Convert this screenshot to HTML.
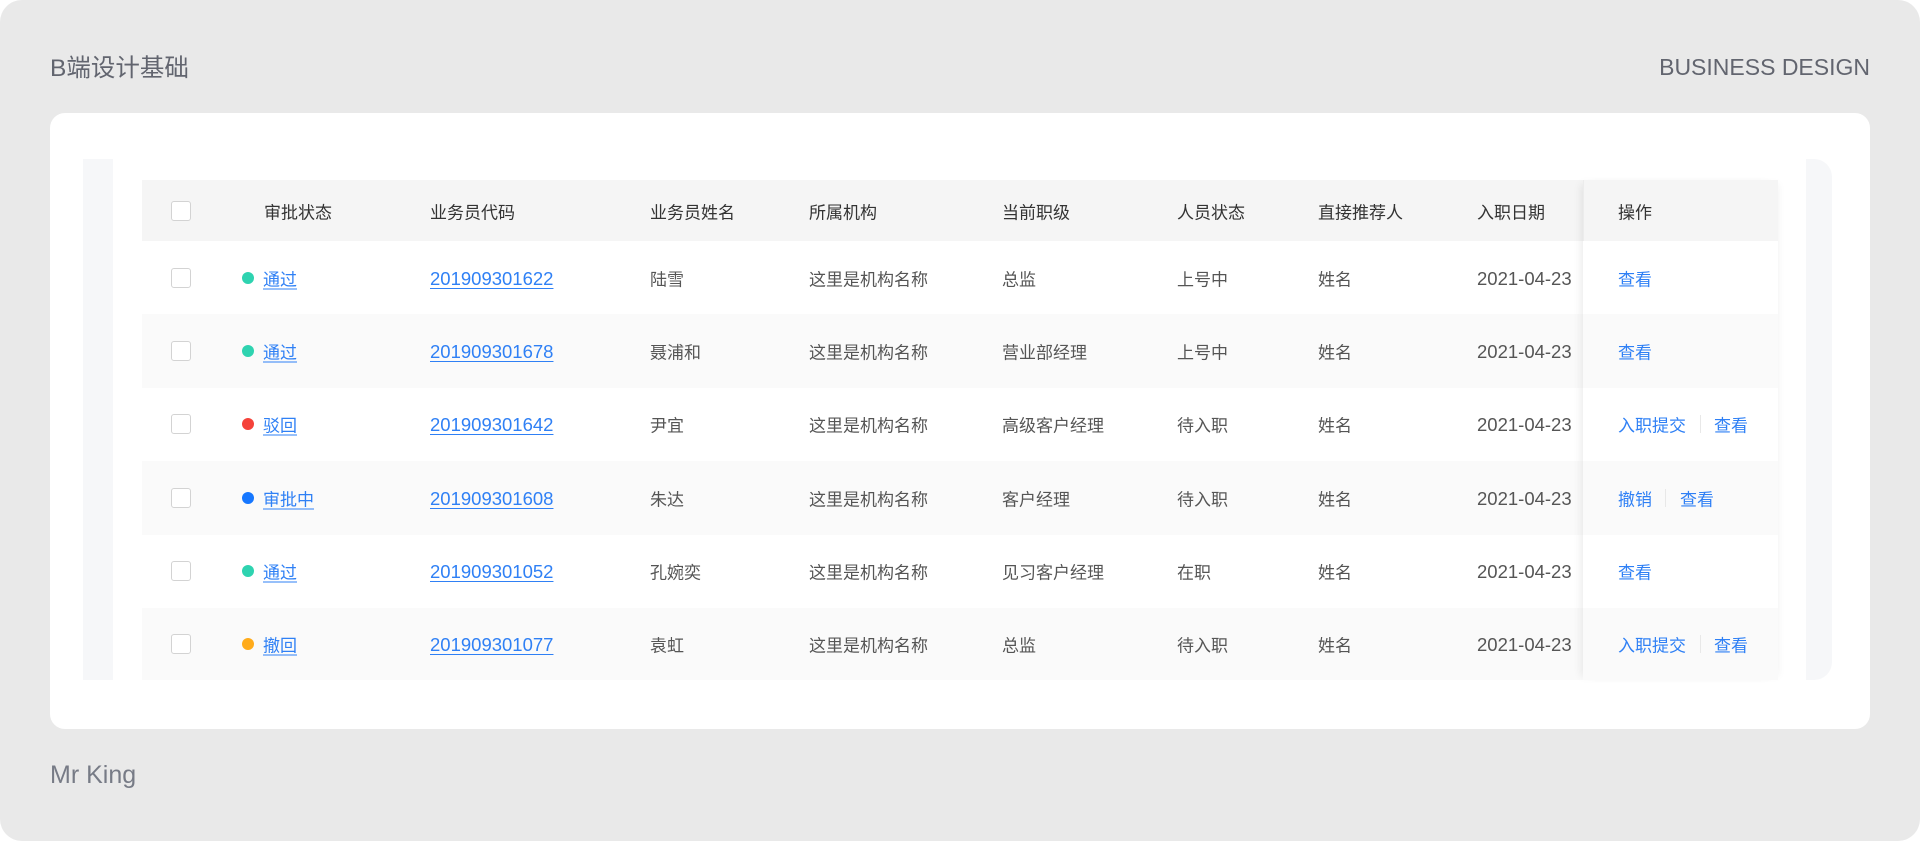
<!DOCTYPE html>
<html><head><meta charset="utf-8"><style>
*{margin:0;padding:0;box-sizing:border-box}
html,body{width:1920px;height:841px;overflow:hidden;background:#fff}
body{font-family:"Liberation Sans","Noto Sans CJK SC",sans-serif;position:relative}
.bg{position:absolute;left:0;top:0;width:1920px;height:841px;background:#e9e9e9;border-radius:22px}
.t{position:absolute;color:#5d606b;font-size:22px;line-height:26px}
.card{position:absolute;left:50px;top:113px;width:1820px;height:616px;background:#fff;border-radius:15px}
.ls{position:absolute;left:83px;top:159px;width:30px;height:521px;background:#f6f7f9}
.rs{position:absolute;left:1806px;top:159px;width:26px;height:521px;background:#f6f7f9;border-radius:0 18px 18px 0}
.row{position:absolute;left:142px;width:1636px;height:73.4px;font-size:17px;color:#555}
.row span,.row a{position:absolute;top:50%;transform:translateY(-50%);white-space:nowrap}
.row .n{font-size:18.5px;margin-top:1px}
.hd{background:#f5f5f5;color:#333}
.w{background:#fff}.g{background:#fafafa}
.cb{position:absolute;left:29px;top:50%;margin-top:-10px;width:20px;height:20px;border:1.5px solid #d3d3d3;border-radius:3px;background:#fff}
.dot{position:absolute;left:100px;top:50%;margin-top:-6px;width:12px;height:12px;border-radius:50%}
a{color:#2f80f5;text-decoration:underline;text-underline-offset:3px}
.op{color:#2f80f5}
.sep{position:absolute;top:50%;margin-top:-9px;width:1px;height:18px;background:#e8e8e8}
.opcol{position:absolute;left:1583px;top:180px;width:195px;height:500px;box-shadow:-6px 0 8px -4px rgba(0,0,0,0.08),4px 0 8px -4px rgba(0,0,0,0.06);pointer-events:none}
</style></head><body>
<div class="bg"></div>
<div class="t" style="left:50px;top:56px;font-size:24.5px;color:#62656f">B端设计基础</div>
<div class="t" style="right:50px;top:54px;font-size:23px;color:#62656f">BUSINESS DESIGN</div>
<div class="t" style="left:50px;top:762px;font-size:25px;color:#777b86">Mr King</div>
<div class="card"></div>
<div class="ls"></div><div class="rs"></div>

<div class="row hd" style="top:180px;height:61px">
<div class="cb"></div>
<span style="left:122px">审批状态</span><span style="left:288px">业务员代码</span><span style="left:508px">业务员姓名</span><span style="left:667px">所属机构</span><span style="left:860px">当前职级</span><span style="left:1035px">人员状态</span><span style="left:1176px">直接推荐人</span><span style="left:1335px">入职日期</span><span style="left:1441px;border-left:1px solid #ececec;height:61px;top:0;transform:none"></span><span style="left:1476px">操作</span>
</div>

<div class="row w" style="top:241px">
<div class="cb"></div><div class="dot" style="background:#2ed3b0"></div>
<a style="left:121px">通过</a><a class="n" style="left:288px">201909301622</a><span style="left:508px">陆雪</span><span style="left:667px">这里是机构名称</span><span style="left:860px">总监</span><span style="left:1035px">上号中</span><span style="left:1176px">姓名</span><span class="n" style="left:1335px">2021-04-23</span><span class="op" style="left:1476px">查看</span>
</div>
<div class="row g" style="top:314.4px">
<div class="cb"></div><div class="dot" style="background:#2ed3b0"></div>
<a style="left:121px">通过</a><a class="n" style="left:288px">201909301678</a><span style="left:508px">聂浦和</span><span style="left:667px">这里是机构名称</span><span style="left:860px">营业部经理</span><span style="left:1035px">上号中</span><span style="left:1176px">姓名</span><span class="n" style="left:1335px">2021-04-23</span><span class="op" style="left:1476px">查看</span>
</div>
<div class="row w" style="top:387.8px">
<div class="cb"></div><div class="dot" style="background:#f5423a"></div>
<a style="left:121px">驳回</a><a class="n" style="left:288px">201909301642</a><span style="left:508px">尹宜</span><span style="left:667px">这里是机构名称</span><span style="left:860px">高级客户经理</span><span style="left:1035px">待入职</span><span style="left:1176px">姓名</span><span class="n" style="left:1335px">2021-04-23</span><span class="op" style="left:1476px">入职提交</span><div class="sep" style="left:1558px"></div><span class="op" style="left:1572px">查看</span>
</div>
<div class="row g" style="top:461.2px">
<div class="cb"></div><div class="dot" style="background:#1677ff"></div>
<a style="left:121px">审批中</a><a class="n" style="left:288px">201909301608</a><span style="left:508px">朱达</span><span style="left:667px">这里是机构名称</span><span style="left:860px">客户经理</span><span style="left:1035px">待入职</span><span style="left:1176px">姓名</span><span class="n" style="left:1335px">2021-04-23</span><span class="op" style="left:1476px">撤销</span><div class="sep" style="left:1523px"></div><span class="op" style="left:1538px">查看</span>
</div>
<div class="row w" style="top:534.6px">
<div class="cb"></div><div class="dot" style="background:#2ed3b0"></div>
<a style="left:121px">通过</a><a class="n" style="left:288px">201909301052</a><span style="left:508px">孔婉奕</span><span style="left:667px">这里是机构名称</span><span style="left:860px">见习客户经理</span><span style="left:1035px">在职</span><span style="left:1176px">姓名</span><span class="n" style="left:1335px">2021-04-23</span><span class="op" style="left:1476px">查看</span>
</div>
<div class="row g" style="top:608px;height:72px">
<div class="cb"></div><div class="dot" style="background:#ffab1a"></div>
<a style="left:121px">撤回</a><a class="n" style="left:288px">201909301077</a><span style="left:508px">袁虹</span><span style="left:667px">这里是机构名称</span><span style="left:860px">总监</span><span style="left:1035px">待入职</span><span style="left:1176px">姓名</span><span class="n" style="left:1335px">2021-04-23</span><span class="op" style="left:1476px">入职提交</span><div class="sep" style="left:1558px"></div><span class="op" style="left:1572px">查看</span>
</div>
<div class="opcol"></div>
</body></html>
